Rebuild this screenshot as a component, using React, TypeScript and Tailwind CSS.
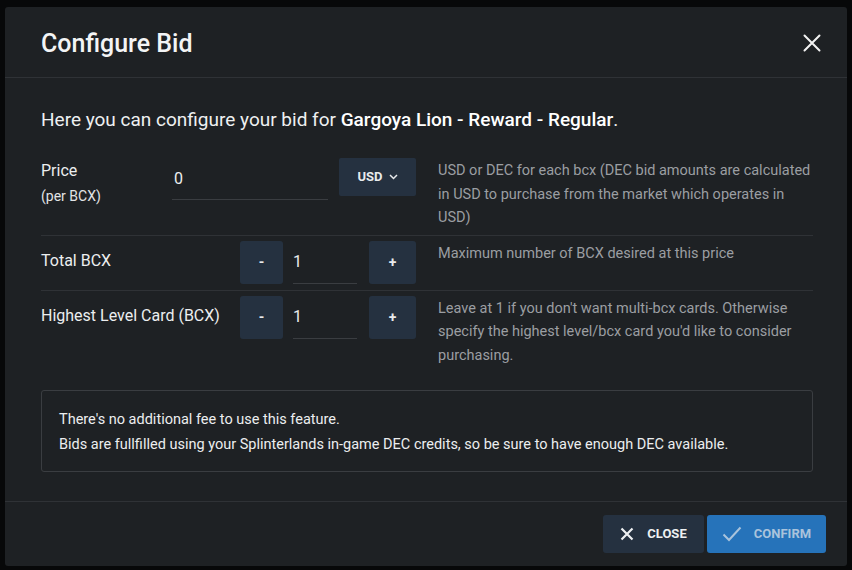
import React from "react";

const font = { fontFamily: "Roboto, 'Noto Sans', sans-serif" };

function StepBtn({ children }: { children: React.ReactNode }) {
  return (
    <div className="flex h-[43px] w-[47px] items-center justify-center rounded-[3px] bg-[#253140] text-[14px] font-bold text-[#e8eaec]">
      {children}
    </div>
  );
}

function Stepper() {
  return (
    <div className="flex items-start">
      <div className="flex h-[43px] w-[43px] items-center justify-center rounded-[3px] bg-[#253140] text-[14px] font-bold text-[#e8eaec]">-</div>
      <div className="ml-[10px] flex h-[43px] w-[64px] items-center border-b border-[#3a3d41] text-[16px] text-[#e8eaec]">1</div>
      <div className="ml-[12px]">
        <StepBtn>+</StepBtn>
      </div>
    </div>
  );
}

export default function App() {
  return (
    <div className="h-[570px] w-[852px] overflow-hidden bg-[#070809] pl-[5px] pt-[7px]" style={font}>
      <div className="flex h-[559px] w-[842px] flex-col rounded-[3px] bg-[#1e2124]">
        {/* Header */}
        <div className="flex h-[71px] shrink-0 items-center justify-between border-b border-[#2f3236] pl-[36px] pr-[26px]">
          <div className="mt-[3px] text-[25px] font-medium text-[#f3f4f5]">Configure Bid</div>
          <svg width="18" height="18" viewBox="0 0 18 18" className="mt-[2px]">
            <path d="M1.5 1.5 L16.5 16.5 M16.5 1.5 L1.5 16.5" stroke="#f2f2f2" strokeWidth="2" strokeLinecap="round" />
          </svg>
        </div>

        {/* Body */}
        <div className="flex-1 pl-[36px] pr-[34px] pt-[28px]">
          <div className="text-[19px] leading-[27px] text-[#eef0f1]">
            Here you can configure your bid for <span className="font-medium text-white">Gargoya Lion - Reward - Regular</span>.
          </div>

          {/* Row 1 */}
          <div className="mt-[20px] flex border-b border-[#2f3236] pb-[5px] pt-[5px]">
            <div className="w-[131px] shrink-0 pt-[1px]">
              <div className="text-[16px] leading-[24px] text-[#eceeef]">Price</div>
              <div className="mt-[3px] text-[14px] leading-[20px] text-[#e2e4e6]">(per BCX)</div>
            </div>
            <div className="flex w-[244px] shrink-0 items-start">
              <div className="flex h-[42px] w-[156px] items-center border-b border-[#3a3d41] pl-[2px] text-[16px] text-[#eceeef]">0</div>
              <div className="ml-[11px] flex h-[38px] w-[77px] items-center justify-center gap-[6px] rounded-[2px] bg-[#253140] text-[13px] font-bold text-[#e8eaec]">
                USD
                <svg width="9" height="6" viewBox="0 0 9 6">
                  <path d="M1 1 L4.5 4.5 L8 1" stroke="#e8eaec" strokeWidth="1.5" fill="none" />
                </svg>
              </div>
            </div>
            <div className="ml-[22px] pt-[1px] text-[14.5px] leading-[23.5px] text-[#9b9ea2]">
              USD or DEC for each bcx (DEC bid amounts are calculated in USD to purchase from the market which operates in USD)
            </div>
          </div>

          {/* Row 2 */}
          <div className="flex border-b border-[#2f3236] pb-[6px] pt-[5px]">
            <div className="w-[199px] shrink-0 pt-[8px] text-[16px] leading-[24px] text-[#eceeef]">Total BCX</div>
            <div className="w-[176px] shrink-0">
              <Stepper />
            </div>
            <div className="ml-[22px] pt-[1px] text-[14.5px] leading-[23px] text-[#9b9ea2]">Maximum number of BCX desired at this price</div>
          </div>

          {/* Row 3 */}
          <div className="flex pb-[5px] pt-[5px]">
            <div className="w-[199px] shrink-0 pt-[8px] text-[16px] leading-[24px] text-[#eceeef]">Highest Level Card (BCX)</div>
            <div className="w-[176px] shrink-0">
              <Stepper />
            </div>
            <div className="ml-[22px] pt-[1px] text-[14.5px] leading-[23.5px] text-[#9b9ea2]">
              Leave at 1 if you don't want multi-bcx cards. Otherwise specify the highest level/bcx card you'd like to consider purchasing.
            </div>
          </div>

          {/* Info box */}
          <div className="mt-[18px] h-[82px] rounded-[3px] border border-[#3a3d41] pl-[17px] pt-[16px] text-[14.5px] leading-[25px] text-[#eceeef]">
            <div>There's no additional fee to use this feature.</div>
            <div>Bids are fullfilled using your Splinterlands in-game DEC credits, so be sure to have enough DEC available.</div>
          </div>
        </div>

        {/* Footer */}
        <div className="flex h-[65px] shrink-0 items-start justify-end gap-[3px] border-t border-[#2f3236] pr-[21px] pt-[13px]">
          <div className="flex h-[38px] w-[101px] items-center justify-center gap-[13px] rounded-[3px] bg-[#253140] text-[13px] font-bold text-[#eef0f2]">
            <svg width="14" height="14" viewBox="0 0 14 14">
              <path d="M1.5 1.5 L12.5 12.5 M12.5 1.5 L1.5 12.5" stroke="#eef0f2" strokeWidth="2.2" />
            </svg>
            CLOSE
          </div>
          <div className="flex h-[38px] w-[119px] items-center justify-center gap-[12px] rounded-[3px] bg-[#2673ba] text-[13px] font-bold text-[#a9c3dc]">
            <svg width="20" height="16" viewBox="0 0 20 16">
              <path d="M1.5 8.5 L7 14 L18.5 1.5" stroke="#a9c3dc" strokeWidth="2" fill="none" />
            </svg>
            CONFIRM
          </div>
        </div>
      </div>
    </div>
  );
}
